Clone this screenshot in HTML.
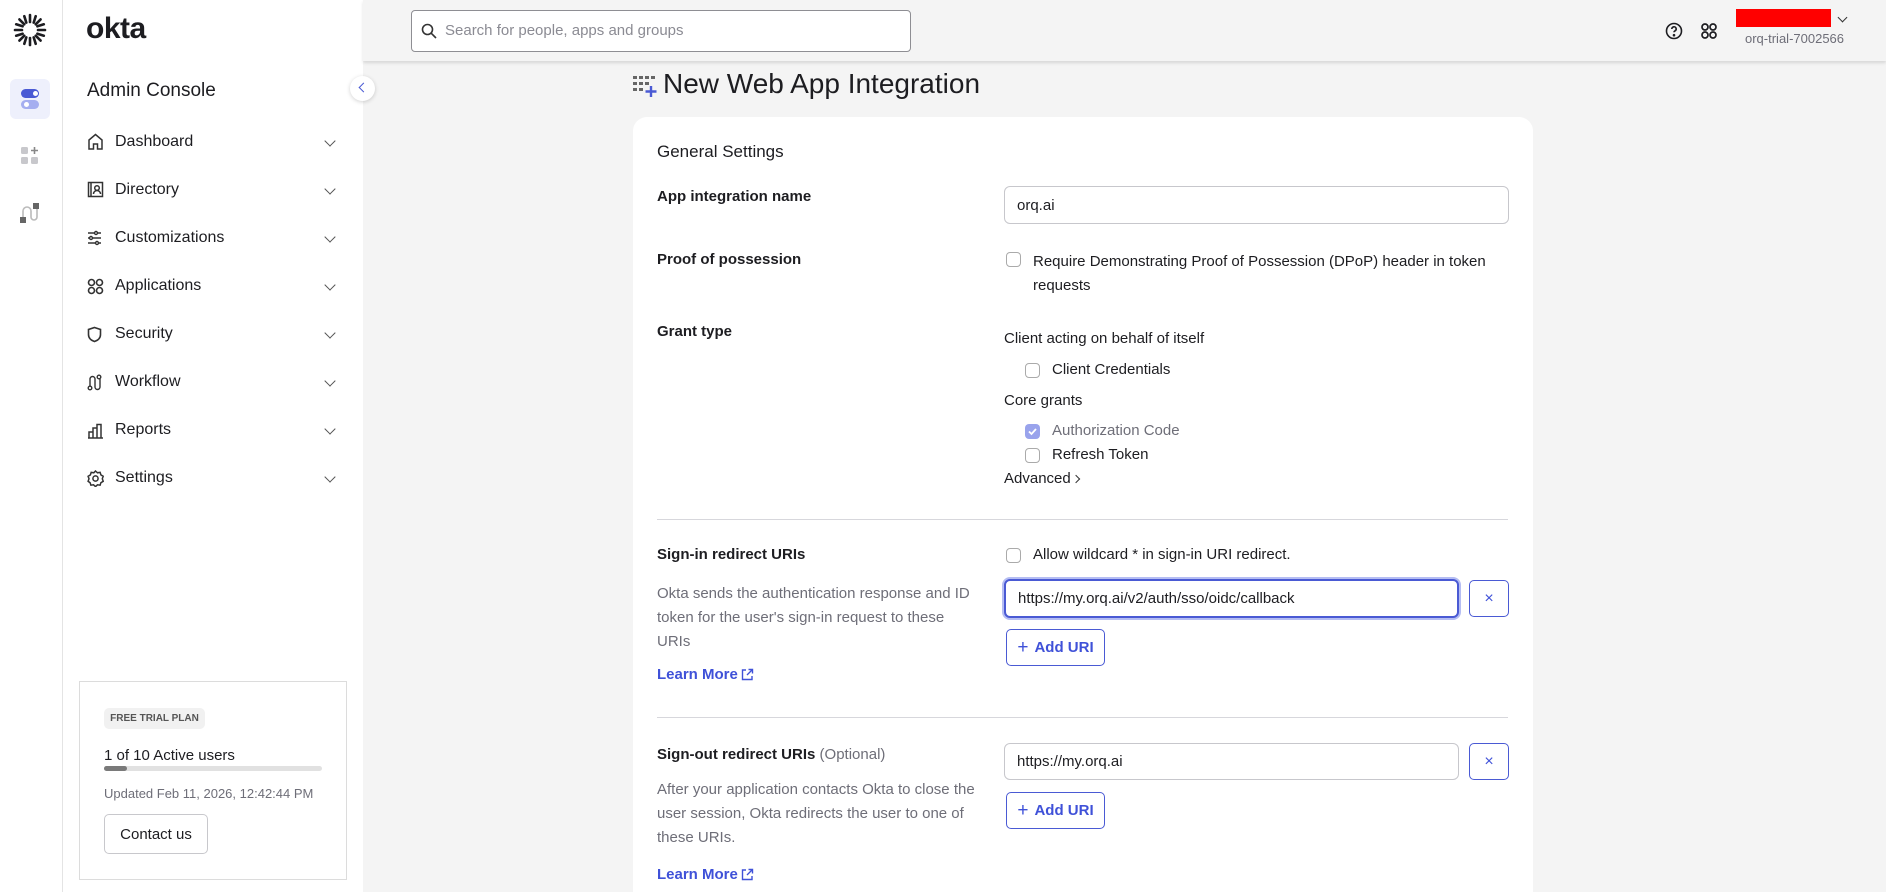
<!DOCTYPE html>
<html style="overflow:hidden;width:1886px;height:892px"><head><meta charset="utf-8"><style>
*{box-sizing:border-box;margin:0;padding:0}
body{width:1886px;height:892px;overflow:hidden;background:#f4f4f4;font-family:"Liberation Sans",sans-serif;color:#1d1d21;position:relative}
.a{position:absolute;white-space:nowrap}
.rail{left:0;top:0;width:63px;height:892px;background:#fff;border-right:1px solid #e4e4e4}
.side{left:63px;top:0;width:300px;height:892px;background:#fff}
.top{left:363px;top:0;width:1523px;height:61px;background:#f4f4f4;box-shadow:0 2px 3px rgba(0,0,0,.12)}
.nav{left:115px;font-size:16px;color:#1d1d21}
.chev{left:326px;width:8px;height:8px;border-right:1.5px solid #555;border-bottom:1.5px solid #555;transform:rotate(45deg)}
.lbl{left:657px;font-size:15px;font-weight:bold;color:#1d1d21}
.t{font-size:15px;color:#1d1d21}
.g{color:#6e6e78}
.cb{width:15px;height:15px;border:1.5px solid #aaa;border-radius:4px;background:#fff}
.inp{border:1px solid #c7c7cc;border-radius:6px;background:#fff;font-size:15px;padding-left:12px;display:flex;align-items:center}
.btn{border:1px solid #4a5ad4;border-radius:5px;color:#3f51d8;font-size:15px;font-weight:bold;display:flex;align-items:center;justify-content:center;background:#fff}
.hr{left:657px;width:851px;height:1px;background:#d7d7dc}
.link{color:#3f51d8;font-size:15px;font-weight:bold}
</style></head><body>
<div class="a rail"></div>
<svg class="a" style="left:13px;top:13px" width="34" height="34" viewBox="0 0 34 34"><g stroke="#1d1d21" stroke-width="2.6" stroke-linecap="round">
<line x1="17" y1="2" x2="17" y2="9"/><line x1="17" y1="25" x2="17" y2="32"/><line x1="2" y1="17" x2="9" y2="17"/><line x1="25" y1="17" x2="32" y2="17"/>
<line x1="6.4" y1="6.4" x2="11.3" y2="11.3"/><line x1="22.7" y1="22.7" x2="27.6" y2="27.6"/><line x1="27.6" y1="6.4" x2="22.7" y2="11.3"/><line x1="11.3" y1="22.7" x2="6.4" y2="27.6"/>
<line x1="11.3" y1="3.2" x2="13.3" y2="9.6"/><line x1="22.7" y1="3.2" x2="20.7" y2="9.6"/><line x1="11.3" y1="30.8" x2="13.3" y2="24.4"/><line x1="22.7" y1="30.8" x2="20.7" y2="24.4"/>
<line x1="3.2" y1="11.3" x2="9.6" y2="13.3"/><line x1="3.2" y1="22.7" x2="9.6" y2="20.7"/><line x1="30.8" y1="11.3" x2="24.4" y2="13.3"/><line x1="30.8" y1="22.7" x2="24.4" y2="20.7"/></g></svg>
<div class="a" style="left:10px;top:79px;width:40px;height:40px;background:#eef0fc;border-radius:6px"></div>
<div class="a" style="left:21px;top:89px;width:18px;height:9px;background:#4a5ad4;border-radius:5px"></div>
<div class="a" style="left:33px;top:91px;width:5px;height:5px;background:#fff;border-radius:50%"></div>
<div class="a" style="left:21px;top:100px;width:18px;height:9px;background:#a5aef0;border-radius:5px"></div>
<div class="a" style="left:24px;top:102px;width:5px;height:5px;background:#fff;border-radius:50%"></div>
<svg class="a" style="left:20px;top:146px" width="20" height="20"><g fill="#c8c8cc"><rect x="1" y="1" width="7" height="7" rx="1.5"/><rect x="1" y="11" width="7" height="7" rx="1.5"/><rect x="11" y="11" width="7" height="7" rx="1.5"/></g><path d="M14.5 1v7M11 4.5h7" stroke="#888" stroke-width="1.6"/></svg>
<svg class="a" style="left:19px;top:201px" width="22" height="24"><rect x="14" y="2" width="6" height="6" fill="#666"/><rect x="1" y="16" width="6" height="6" fill="#666"/><path d="M4 16V10a4 4 0 0 1 8 0v6a3 3 0 0 0 6 0V8" fill="none" stroke="#bbb" stroke-width="1.6"/></svg>

<div class="a side"></div>
<div class="a" style="left:86px;top:12px;font-size:30px;font-weight:bold;letter-spacing:-.5px;color:#1d1d21">okta</div>
<div class="a" style="left:87px;top:80px;font-size:19px;color:#1d1d21">Admin Console</div>
<div class="a" style="left:350px;top:76px;width:25px;height:25px;border-radius:50%;background:#fff;box-shadow:0 1px 4px rgba(0,0,0,.18)"></div>
<div class="a" style="left:360px;top:84px;width:7px;height:7px;border-left:1.8px solid #4a5ad4;border-bottom:1.8px solid #4a5ad4;transform:rotate(45deg)"></div>

<svg class="a" style="left:87px;top:133px" width="17" height="17" fill="none" stroke="#333" stroke-width="1.5"><path d="M2 16V7l6.5-5.5L15 7v9h-4.5v-5h-4v5z"/></svg>
<div class="a nav" style="top:133px">Dashboard</div>
<svg class="a" style="left:87px;top:181px" width="17" height="17" fill="none" stroke="#333" stroke-width="1.5"><rect x="1.5" y="1.5" width="14" height="14"/><path d="M4 1.5v14"/><circle cx="10" cy="7" r="2.3"/><path d="M6.5 13a3.5 3.5 0 0 1 7 0"/></svg>
<div class="a nav" style="top:181px">Directory</div>
<svg class="a" style="left:87px;top:230px" width="15" height="16" fill="none" stroke="#333" stroke-width="1.4"><path d="M1 3h13M1 8h13M1 13h13"/><circle cx="9" cy="3" r="1.5" fill="#fff"/><circle cx="4" cy="8" r="1.5" fill="#fff"/><circle cx="10" cy="13" r="1.5" fill="#fff"/></svg>
<div class="a nav" style="top:229px">Customizations</div>
<svg class="a" style="left:87px;top:278px" width="17" height="17" fill="none" stroke="#333" stroke-width="1.6"><circle cx="4.5" cy="4.5" r="3"/><circle cx="12.5" cy="4.5" r="3"/><circle cx="4.5" cy="12.5" r="3"/><circle cx="12.5" cy="12.5" r="3"/></svg>
<div class="a nav" style="top:277px">Applications</div>
<svg class="a" style="left:87px;top:326px" width="15" height="17" fill="none" stroke="#333" stroke-width="1.6"><path d="M7.5 1.5L13.5 3.5v5c0 4-3 6-6 7-3-1-6-3-6-7v-5z"/></svg>
<div class="a nav" style="top:325px">Security</div>
<svg class="a" style="left:87px;top:374px" width="15" height="17" fill="none" stroke="#333" stroke-width="1.4"><circle cx="3" cy="14" r="1.8"/><circle cx="12" cy="3" r="1.8"/><path d="M3 12V5a2.5 2.5 0 0 1 5 0v8a2.5 2.5 0 0 0 5 0V5"/></svg>
<div class="a nav" style="top:373px">Workflow</div>
<svg class="a" style="left:87px;top:423px" width="17" height="16" fill="none" stroke="#333" stroke-width="1.5"><path d="M1 15h15M2 15V9h4v6M6 15V5h4v10M10 15V1.5h4V15"/></svg>
<div class="a nav" style="top:421px">Reports</div>
<svg class="a" style="left:87px;top:470px" width="17" height="17" fill="none" stroke="#333" stroke-width="1.5"><path d="M8.5 1l2 1.8 2.6-.4.8 2.5 2.3 1.4-.9 2.5.9 2.5-2.3 1.4-.8 2.5-2.6-.4-2 1.8-2-1.8-2.6.4-.8-2.5L1.1 11.3l.9-2.5-.9-2.5 2.3-1.4.8-2.5 2.6.4z"/><circle cx="8.5" cy="8.5" r="2.6"/></svg>
<div class="a nav" style="top:469px">Settings</div>
<div class="a chev" style="top:137px"></div><div class="a chev" style="top:185px"></div><div class="a chev" style="top:233px"></div><div class="a chev" style="top:281px"></div><div class="a chev" style="top:329px"></div><div class="a chev" style="top:377px"></div><div class="a chev" style="top:425px"></div><div class="a chev" style="top:473px"></div>

<div class="a" style="left:79px;top:681px;width:268px;height:199px;border:1px solid #dcdcdc"></div>
<div class="a" style="left:104px;top:708px;width:101px;height:21px;background:#f1f1f1;border-radius:5px;font-size:10px;font-weight:bold;color:#555;display:flex;align-items:center;justify-content:center">FREE TRIAL PLAN</div>
<div class="a" style="left:104px;top:747px;font-size:15px">1 of 10 Active users</div>
<div class="a" style="left:104px;top:766px;width:218px;height:5px;background:#e1e1e1;border-radius:3px"></div>
<div class="a" style="left:104px;top:766px;width:23px;height:5px;background:#7a7a7a;border-radius:3px"></div>
<div class="a" style="left:104px;top:786px;font-size:13px;color:#6e6e78">Updated Feb 11, 2026, 12:42:44 PM</div>
<div class="a" style="left:104px;top:814px;width:104px;height:40px;border:1px solid #c8c8cc;border-radius:5px;font-size:15px;display:flex;align-items:center;justify-content:center">Contact us</div>

<div class="a top"></div>
<div class="a" style="left:411px;top:10px;width:500px;height:42px;border:1px solid #8e8e93;border-radius:4px;background:#fff"></div>
<svg class="a" style="left:421px;top:23px" width="16" height="16" fill="none" stroke="#333" stroke-width="1.6"><circle cx="6.5" cy="6.5" r="5"/><path d="M10.3 10.3L15 15"/></svg>
<div class="a" style="left:445px;top:22px;font-size:15px;color:#8b8b93">Search for people, apps and groups</div>
<svg class="a" style="left:1665px;top:22px" width="18" height="18" fill="none" stroke="#1d1d21" stroke-width="1.6"><circle cx="9" cy="9" r="7.5"/><path d="M6.8 7a2.2 2.2 0 1 1 3 2c-.6.3-.8.7-.8 1.3"/><circle cx="9" cy="13.2" r=".5" fill="#1d1d21"/></svg>
<svg class="a" style="left:1700px;top:22px" width="18" height="18" fill="none" stroke="#1d1d21" stroke-width="1.7"><circle cx="5" cy="5" r="3"/><circle cx="13" cy="5" r="3"/><circle cx="5" cy="13" r="3"/><circle cx="13" cy="13" r="3"/></svg>
<div class="a" style="left:1736px;top:9px;width:95px;height:18px;background:#ff0000"></div>
<div class="a" style="left:1839px;top:14px;width:7px;height:7px;border-right:1.6px solid #333;border-bottom:1.6px solid #333;transform:rotate(45deg)"></div>
<div class="a" style="left:1745px;top:31px;font-size:13px;color:#6e6e78">orq-trial-7002566</div>

<svg class="a" style="left:633px;top:75px" width="24" height="24"><g fill="#666"><rect x="0" y="1" width="4" height="3"/><rect x="6" y="1" width="4" height="3"/><rect x="12" y="1" width="4" height="3"/><rect x="18" y="1" width="4" height="3"/><rect x="0" y="7" width="4" height="3"/><rect x="6" y="7" width="4" height="3"/><rect x="12" y="7" width="4" height="3"/><rect x="0" y="13" width="4" height="3"/><rect x="6" y="13" width="4" height="3"/></g><path d="M18 11v11M12.5 16.5h11" stroke="#4a5ad4" stroke-width="2.4"/></svg>
<div class="a" style="left:663px;top:68px;font-size:28px;color:#1d1d21">New Web App Integration</div>

<div class="a" style="left:633px;top:117px;width:900px;height:775px;background:#fff;border-radius:14px 14px 0 0"></div>
<div class="a t" style="left:657px;top:142px;font-size:17px">General Settings</div>
<div class="a lbl" style="top:188px">App integration name</div>
<div class="a inp" style="left:1004px;top:186px;width:505px;height:38px">orq.ai</div>
<div class="a lbl" style="top:251px">Proof of possession</div>
<div class="a cb" style="left:1006px;top:252px"></div>
<div class="a t" style="left:1033px;top:250px;line-height:24px;white-space:normal;width:470px">Require Demonstrating Proof of Possession (DPoP) header in token requests</div>
<div class="a lbl" style="top:323px">Grant type</div>
<div class="a t" style="left:1004px;top:330px">Client acting on behalf of itself</div>
<div class="a cb" style="left:1025px;top:363px"></div>
<div class="a t" style="left:1052px;top:361px">Client Credentials</div>
<div class="a t" style="left:1004px;top:392px">Core grants</div>
<div class="a" style="left:1025px;top:424px;width:15px;height:15px;border-radius:4px;background:#99a3ec"></div>
<svg class="a" style="left:1025px;top:424px" width="15" height="15"><path d="M4 7.5l2.5 2.5 4.5-5" fill="none" stroke="#fff" stroke-width="1.8"/></svg>
<div class="a t g" style="left:1052px;top:422px">Authorization Code</div>
<div class="a cb" style="left:1025px;top:448px"></div>
<div class="a t" style="left:1052px;top:446px">Refresh Token</div>
<div class="a t" style="left:1004px;top:470px">Advanced</div>
<div class="a" style="left:1073px;top:476px;width:6px;height:6px;border-right:1.4px solid #333;border-bottom:1.4px solid #333;transform:rotate(-45deg)"></div>
<div class="a hr" style="top:519px"></div>

<div class="a lbl" style="top:546px">Sign-in redirect URIs</div>
<div class="a cb" style="left:1006px;top:548px"></div>
<div class="a t" style="left:1033px;top:546px">Allow wildcard * in sign-in URI redirect.</div>
<div class="a t g" style="left:657px;top:582px;line-height:24px;white-space:normal;width:318px">Okta sends the authentication response and ID token for the user's sign-in request to these URIs</div>
<div class="a link" style="left:657px;top:666px">Learn More</div>
<svg class="a" style="left:741px;top:668px" width="13" height="13" fill="none" stroke="#3f51d8" stroke-width="1.4"><path d="M5 2H1.5v9.5H11V8M7.5 1.5h4v4M11.5 1.5L6 7"/></svg>
<div class="a inp" style="left:1004px;top:579px;width:455px;height:39px;border:2px solid #4a5ad4;box-shadow:0 0 0 2px #b5bdf3">https://my.orq.ai/v2/auth/sso/oidc/callback</div>
<div class="a btn" style="left:1469px;top:580px;width:40px;height:37px;font-weight:normal;font-size:16px">×</div>
<div class="a btn" style="left:1006px;top:629px;width:99px;height:37px"><span style="font-size:19px;font-weight:normal;margin-right:6px">+</span>Add URI</div>
<div class="a hr" style="top:717px"></div>

<div class="a lbl" style="top:746px">Sign-out redirect URIs <span style="font-weight:normal;color:#6e6e78">(Optional)</span></div>
<div class="a inp" style="left:1004px;top:743px;width:455px;height:37px">https://my.orq.ai</div>
<div class="a btn" style="left:1469px;top:743px;width:40px;height:37px;font-weight:normal;font-size:16px">×</div>
<div class="a t g" style="left:657px;top:778px;line-height:24px;white-space:normal;width:330px">After your application contacts Okta to close the user session, Okta redirects the user to one of these URIs.</div>
<div class="a btn" style="left:1006px;top:792px;width:99px;height:37px"><span style="font-size:19px;font-weight:normal;margin-right:6px">+</span>Add URI</div>
<div class="a link" style="left:657px;top:866px">Learn More</div>
<svg class="a" style="left:741px;top:868px" width="13" height="13" fill="none" stroke="#3f51d8" stroke-width="1.4"><path d="M5 2H1.5v9.5H11V8M7.5 1.5h4v4M11.5 1.5L6 7"/></svg>
</body></html>
